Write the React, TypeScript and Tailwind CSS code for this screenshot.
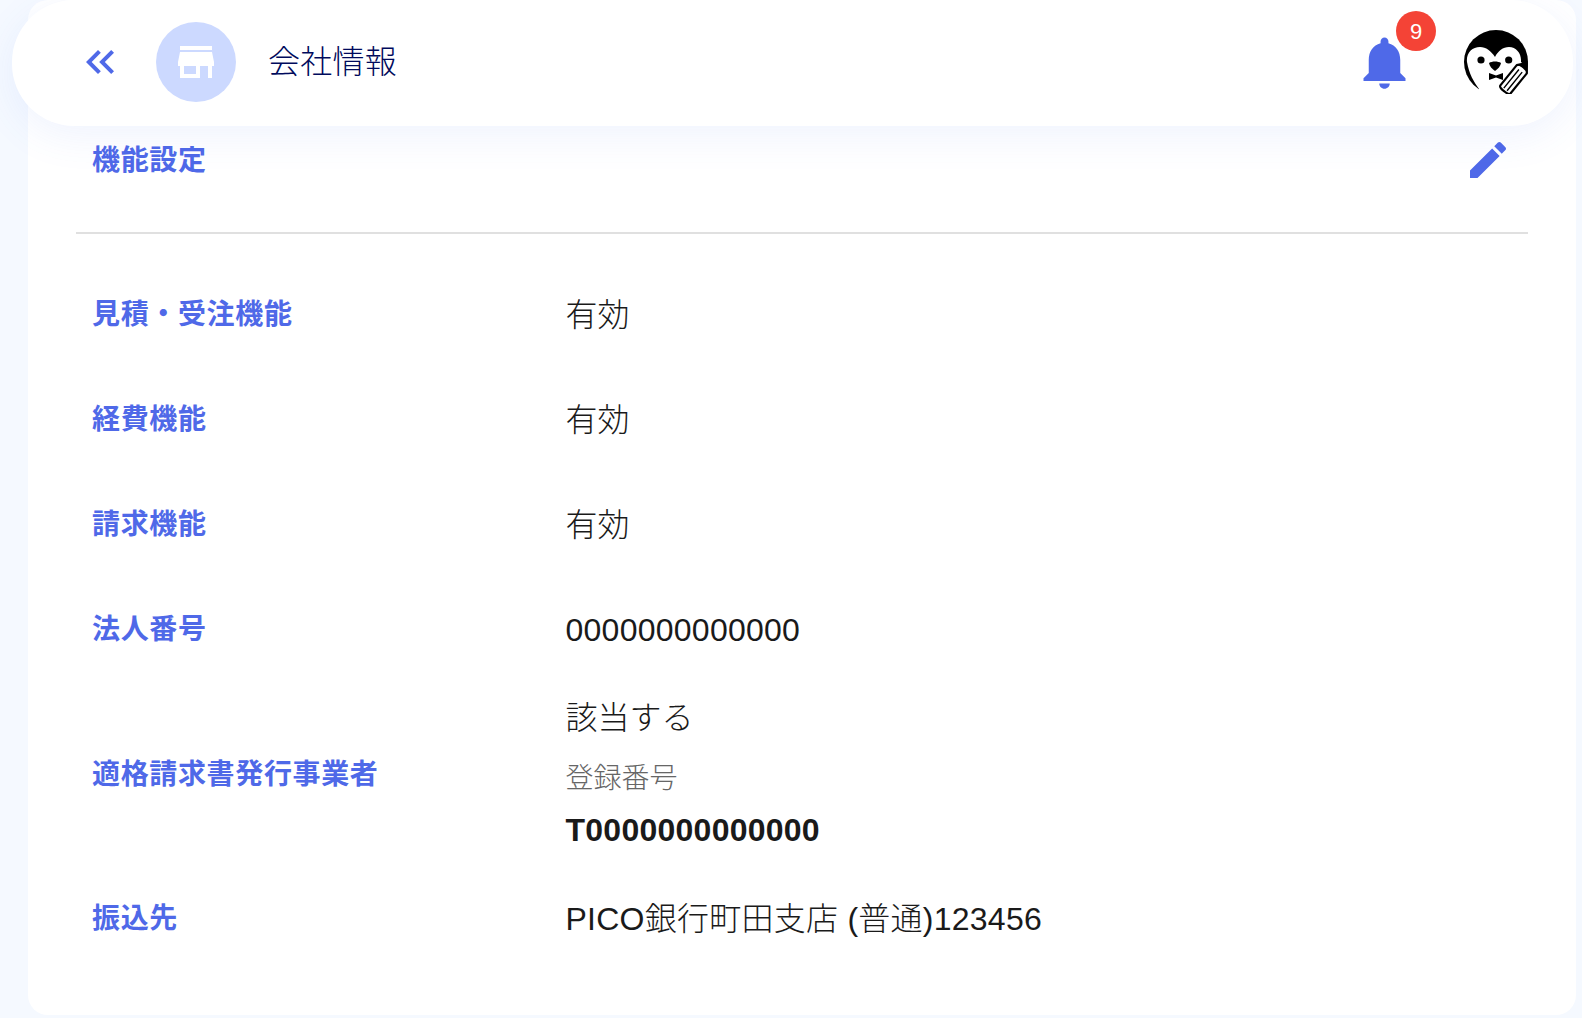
import React from "react";

const FONT = "font-['Liberation_Sans','Noto_Sans_CJK_JP',sans-serif]";

function Icon({ d, size, className }: { d: string; size: number; className: string }) {
  return (
    <svg width={size} height={size} viewBox="0 0 24 24" className={className} fill="currentColor">
      <path d={d} />
    </svg>
  );
}

function Penguin() {
  return (
    <svg width="64" height="64" viewBox="0 0 64 64" className="block">
      <circle cx="32" cy="32" r="32" fill="#000" />
      <path
        d="M3 32C2 23 8 17 16 17C22 17 27 21 31 27C34 21 39 17 45 17C52 17 57 23 57 30V32L64 38V70H15V59C10 52 5 44 3 32Z"
        fill="#fff"
      />
      <circle cx="17" cy="30" r="3.6" fill="#000" />
      <circle cx="44.7" cy="30" r="3.6" fill="#000" />
      <path d="M25 33C28 31 34 31 37 33C36.5 36 34 39 31 41C28 39 25.5 36 25 33Z" fill="#000" />
      <path d="M25 43L32 45.5L39 43V50L32 47.5L25 50Z" fill="#000" />
      <g transform="rotate(39 51.5 47)">
        <path d="M45 37L51.5 29L58 37V63C58 66 45 66 45 63Z" fill="#fff" stroke="#000" strokeWidth="2.2" strokeLinejoin="round" />
        <path d="M45 37C47.5 35 55.5 35 58 37L51.5 29Z" fill="#000" />
        <path d="M49.4 39V63M53.6 39V63" stroke="#000" strokeWidth="1.4" />
      </g>
    </svg>
  );
}

function Row({ label, children, h }: { label: string; children: React.ReactNode; h: string }) {
  return (
    <div className={`grid grid-cols-[489.5px_1fr] items-center ${h}`}>
      <div className="pl-[16px] text-[28px] font-bold leading-10 tracking-[0.65px] text-[#4f69e8]">{label}</div>
      <div className="text-[32px] font-light leading-10 text-[#1a1a1a]">{children}</div>
    </div>
  );
}

export default function App() {
  return (
    <div className={`relative h-[1018px] w-full overflow-hidden bg-[#f5f9ff] ${FONT}`}>
      <header className="absolute left-3 right-[9px] top-0 z-10 flex h-[126px] items-center rounded-[62px] bg-white pb-[2px] pl-[64px] pr-[45px] shadow-[0_10px_40px_rgba(80,120,240,0.09)]">
        <Icon
          size={48}
          className="text-[#4f69e8]"
          d="M17.59 18 19 16.59 14.42 12 19 7.41 17.59 6l-6 6z M11 18l1.41-1.41L7.83 12l4.58-4.59L11 6l-6 6z"
        />
        <div className="ml-[32px] flex h-20 w-20 items-center justify-center rounded-full bg-[#ccd9ff]">
          <Icon
            size={48}
            className="text-white"
            d="M20 4H4v2h16V4zm1 10v-2l-1-5H4l-1 5v2h1v6h10v-6h4v6h2v-6h1zm-9 4H6v-4h6v4z"
          />
        </div>
        <h1 className="ml-[32px] text-[32px] font-light leading-10 tracking-[0.25px] text-[#000a5c]">会社情報</h1>
        <div className="relative ml-auto mr-[50px] h-[60px] w-[60px]">
          <Icon
            size={63}
            className="-ml-[1.5px] -mt-[1px] text-[#4f69e8]"
            d="M12 22c1.1 0 2-.9 2-2h-4c0 1.1.89 2 2 2zm6-6v-5c0-3.07-1.64-5.64-4.5-6.32V4c0-.83-.67-1.5-1.5-1.5s-1.5.67-1.5 1.5v.68C7.63 5.36 6 7.92 6 11v5l-2 2v1h16v-1l-2-2z"
          />
          <span className="absolute left-[42px] top-[-21px] flex h-10 w-10 items-center justify-center rounded-full bg-[#f44336] text-[22px] text-white">
            9
          </span>
        </div>
        <Penguin />
      </header>

      <main className="absolute bottom-[3px] left-[28px] right-[6px] top-0 rounded-[20px] bg-white px-[48px] pt-[136px]">
        <div className="flex items-center justify-between border-b-2 border-[#e0e0e0] pb-[48px] pl-[16px] pr-4">
          <div className="mt-[2px] text-[28px] font-bold leading-10 tracking-[0.65px] text-[#4f69e8]">機能設定</div>
          <Icon
            size={48}
            className="text-[#4f69e8]"
            d="M3 17.25V21h3.75L17.81 9.94l-3.75-3.75L3 17.25zM20.71 7.04c.39-.39.39-1.02 0-1.41l-2.34-2.34c-.39-.39-1.02-.39-1.41 0l-1.83 1.83 3.75 3.75 1.83-1.83z"
          />
        </div>
        <div className="pt-[28px]">
          <Row label="見積・受注機能" h="h-[105px]">有効</Row>
          <Row label="経費機能" h="h-[105px]">有効</Row>
          <Row label="請求機能" h="h-[105px]">有効</Row>
          <Row label="法人番号" h="h-[105px]">
            <span className="tracking-[0.25px]">0000000000000</span>
          </Row>
          <Row label="適格請求書発行事業者" h="h-[185px]">
            <div className="flex flex-col pb-[2px]">
              <div>該当する</div>
              <div className="mt-[21px] text-[28px] leading-10 text-[#666666]">登録番号</div>
              <div className="mt-[11px] font-bold tracking-[0.25px]">T0000000000000</div>
            </div>
          </Row>
          <Row label="振込先" h="h-[103px]">
            <span className="tracking-[0.25px]">PICO銀行町田支店 (普通)123456</span>
          </Row>
        </div>
      </main>
    </div>
  );
}
